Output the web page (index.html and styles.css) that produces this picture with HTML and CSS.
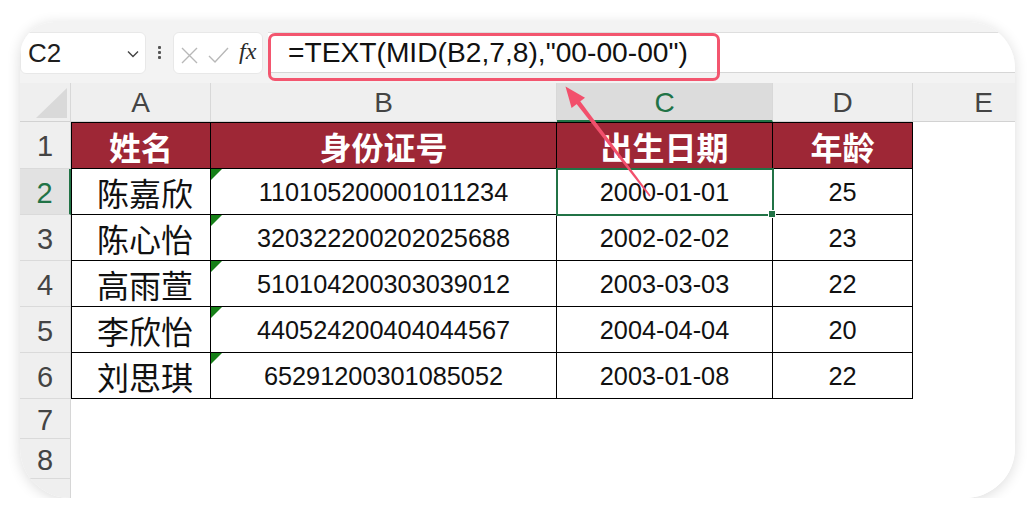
FILE: index.html
```html
<!DOCTYPE html>
<html lang="zh">
<head>
<meta charset="utf-8">
<link rel="stylesheet" href="styles.css">
</head>
<body>
<div class="card">
  <div class="fbar">
    <div class="namebox">
      <span class="ref">C2</span>
      <svg class="chev" width="14" height="10" viewBox="0 0 14 10"><path d="M2 2.5 L7 7.5 L12 2.5" fill="none" stroke="#444" stroke-width="1.4"/></svg>
    </div>
    <div class="dots"><i></i><i></i><i></i></div>
    <div class="fxbox">
      <svg width="60" height="41" viewBox="0 0 60 41">
        <path d="M8 15 L23 30 M23 15 L8 30" stroke="#b8b8b8" stroke-width="1.4" fill="none"/>
        <path d="M35 23 L41 29 L54 15" stroke="#b8b8b8" stroke-width="1.4" fill="none"/>
      </svg>
      <span class="fx">fx</span>
    </div>
    <div class="finput">=TEXT(MID(B2,7,8),"00-00-00")</div>
  </div>

  <div class="sheet">
    <div class="ch corner"><span class="tri"></span></div>
    <div class="ch">A</div>
    <div class="ch">B</div>
    <div class="ch csel">C</div>
    <div class="ch">D</div>
    <div class="ch">E</div>

    <div class="rh">1</div>
    <div class="cell hd first">姓名</div>
    <div class="cell hd">身份证号</div>
    <div class="cell hd">出生日期</div>
    <div class="cell hd">年龄</div>
    <div class="blank"></div>

    <div class="rh rsel">2</div>
    <div class="cell name first">陈嘉欣</div>
    <div class="cell num tag">110105200001011234</div>
    <div class="cell num sel">2000-01-01</div>
    <div class="cell num">25</div>
    <div class="blank"></div>

    <div class="rh">3</div>
    <div class="cell name first">陈心怡</div>
    <div class="cell num tag">320322200202025688</div>
    <div class="cell num">2002-02-02</div>
    <div class="cell num">23</div>
    <div class="blank"></div>

    <div class="rh">4</div>
    <div class="cell name first">高雨萱</div>
    <div class="cell num tag">510104200303039012</div>
    <div class="cell num">2003-03-03</div>
    <div class="cell num">22</div>
    <div class="blank"></div>

    <div class="rh">5</div>
    <div class="cell name first">李欣怡</div>
    <div class="cell num tag">440524200404044567</div>
    <div class="cell num">2004-04-04</div>
    <div class="cell num">20</div>
    <div class="blank"></div>

    <div class="rh">6</div>
    <div class="cell name first">刘思琪</div>
    <div class="cell num tag">65291200301085052</div>
    <div class="cell num">2003-01-08</div>
    <div class="cell num">22</div>
    <div class="blank"></div>

    <div class="rh">7</div>
    <div class="blank wide"></div>
    <div class="rh">8</div>
    <div class="blank wide"></div>
    <div class="rh last"></div>
    <div class="blank wide"></div>
  </div>

  <div class="highlight"></div>
  <svg class="arrow" viewBox="20 22 995 476" width="995" height="476">
    <polygon points="565.5,86.5 571.6,108 585,97.8" fill="#f2506c"/>
    <polygon points="576.2,103.6 579.8,100.8 650.7,195.6 649.3,196.6" fill="#f2506c"/>
  </svg>
</div>
</body>
</html>
```

FILE: styles.css
```css
* { box-sizing: border-box; }
body {
  margin: 0;
  background: #ffffff;
  font-family: "Liberation Sans", Arial, "Noto Sans CJK SC", sans-serif;
}
.card {
  position: relative;
  margin: 22px 0 0 20px;
  width: 995px;
  height: 476px;
  background: #ffffff;
  border-radius: 34px 46px 50px 50px;
  box-shadow: 0 2px 14px rgba(0, 0, 0, 0.14);
  overflow: hidden;
  display: flex;
  flex-direction: column;
}
.fbar {
  display: flex;
  height: 61px;
  padding: 10px 0 10px 0;
  background: #f3f3f3;
  flex: none;
}
.namebox {
  width: 126px;
  height: 42px;
  background: #fff;
  border: 1px solid #e8e8e8;
  border-radius: 6px;
  display: flex;
  align-items: center;
  justify-content: space-between;
  padding: 0 5px 0 7px;
}
.ref {
  font-size: 26px;
  color: #1e1e1e;
}
.chev { margin-top: 2px; }
.dots {
  width: 27px;
  display: flex;
  flex-direction: column;
  align-items: center;
  justify-content: center;
  gap: 2px;
}
.dots i {
  width: 3px;
  height: 3px;
  background: #555;
  border-radius: 1px;
}
.fxbox {
  width: 90px;
  height: 42px;
  background: #fff;
  border: 1px solid #e8e8e8;
  border-radius: 6px;
  display: flex;
  align-items: center;
}
.fx {
  font-family: "Liberation Serif", "Times New Roman", serif;
  font-style: italic;
  font-size: 24px;
  color: #2a2a2a;
  margin-left: 5px;
  margin-top: -3px;
}
.finput {
  flex: 1;
  margin-left: 5px;
  height: 41px;
  background: #fff;
  border-top: 1px solid #dedede;
  border-bottom: 1px solid #d6d6d6;
  padding-left: 20px;
  font-size: 28.2px;
  line-height: 38px;
  color: #111;
  white-space: nowrap;
}
.sheet {
  flex: 1;
  display: grid;
  grid-template-columns: 51px 140px 346px 216px 140px 142px;
  grid-template-rows: 39px 47px 46px 46px 46px 46px 46px 40px 40px 1fr;
}
.ch {
  background: #efefef;
  border-right: 1px solid #d8d8d8;
  border-bottom: 1px solid #d2d2d2;
  display: flex;
  align-items: center;
  justify-content: center;
  font-size: 28px;
  color: #444;
  padding-top: 2px;
}
.corner {
  position: relative;
}
.tri {
  position: absolute;
  right: 3px;
  bottom: 3px;
  width: 0;
  height: 0;
  border-left: 31px solid transparent;
  border-bottom: 30px solid #d9d9d9;
}
.csel {
  background: #dcdcdc;
  color: #217346;
  border-bottom: 2px solid #217346;
}
.rh {
  background: #efefef;
  border-right: 1px solid #d6d6d6;
  border-bottom: 1px solid #dadada;
  display: flex;
  align-items: center;
  justify-content: center;
  font-size: 29px;
  color: #444;
  padding-top: 3px;
}
.rh.last { border-bottom: none; }
.rsel {
  background: #e2e2e2;
  color: #217346;
  border-right: 2px solid #217346;
}
.cell {
  position: relative;
  border-right: 1px solid #000;
  border-bottom: 1px solid #000;
  display: flex;
  align-items: center;
  justify-content: center;
  color: #111;
  white-space: nowrap;
}
.cell.first { border-left: 1px solid #000; }
.hd {
  background: #9e2736;
  color: #fff;
  font-family: "Noto Sans CJK SC", sans-serif;
  font-weight: bold;
  font-size: 32px;
  border-top: 1px solid #000;
}
.name {
  font-family: "Noto Sans CJK SC", sans-serif;
  font-size: 32px;
  padding-left: 8px;
}
.num {
  font-size: 25.3px;
  padding-top: 2px;
}
.tag::before {
  content: "";
  position: absolute;
  left: 0;
  top: 0;
  border-top: 11px solid #168018;
  border-right: 11px solid transparent;
}
.sel {
  outline: 2px solid #217346;
  outline-offset: -1px;
  z-index: 1;
}
.sel::after {
  content: "";
  position: absolute;
  right: -4px;
  bottom: -4px;
  width: 6px;
  height: 6px;
  background: #217346;
  border: 1px solid #fff;
}
.blank { background: #fff; }
.wide { grid-column: 2 / 7; }
.highlight {
  position: absolute;
  left: 248px;
  top: 11px;
  width: 452px;
  height: 48px;
  border: 3px solid #f3566f;
  border-radius: 7px;
  z-index: 3;
}
.arrow {
  position: absolute;
  left: 0;
  top: 0;
  z-index: 4;
  pointer-events: none;
}
```
